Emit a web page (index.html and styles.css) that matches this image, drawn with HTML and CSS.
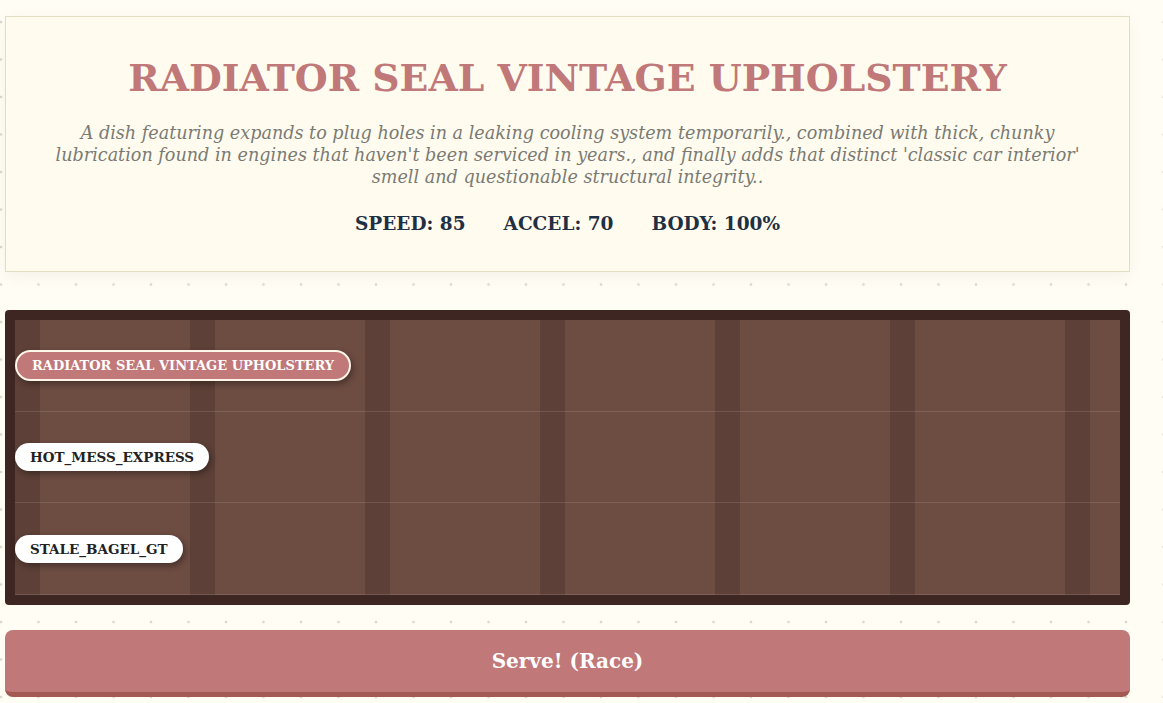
FILE: index.html
```html
<!DOCTYPE html>
<html>
<head>
<meta charset="utf-8">
<link rel="stylesheet" href="styles.css">
</head>
<body>
<div class="page">
  <header class="card">
    <h1 class="title">RADIATOR SEAL VINTAGE UPHOLSTERY</h1>
    <p class="desc">A dish featuring expands to plug holes in a leaking cooling system temporarily., combined with thick, chunky lubrication found in engines that haven't been serviced in years., and finally adds that distinct 'classic car interior' smell and questionable structural integrity..</p>
    <div class="stats">
      <span class="stat">SPEED: 85</span>
      <span class="stat">ACCEL: 70</span>
      <span class="stat">BODY: 100%</span>
    </div>
  </header>
  <section class="track">
    <div class="lanes">
      <div class="lane"><span class="car car-player">RADIATOR SEAL VINTAGE UPHOLSTERY</span></div>
      <div class="lane"><span class="car">HOT_MESS_EXPRESS</span></div>
      <div class="lane"><span class="car">STALE_BAGEL_GT</span></div>
    </div>
  </section>
  <button class="serve">Serve! (Race)</button>
</div>
</body>
</html>
```
FILE: styles.css
```css
html, body {
  margin: 0;
  padding: 0;
}
body {
  background-color: #fffdf4;
  background-image: radial-gradient(circle, #dcd9cc 1.4px, transparent 1.6px);
  background-size: 37.5px 37.5px;
  background-position: -17.75px 3.25px;
  font-family: "DejaVu Serif", "Liberation Serif", serif;
  height: 703px;
  overflow: hidden;
}
.page {
  width: 1125px;
  margin: 16px 0 0 5px;
  display: flex;
  flex-direction: column;
}
.card {
  background: #fffcef;
  border: 1px solid #e2dcc2;
  box-shadow: 0 4px 16px rgba(0, 0, 0, 0.05);
  text-align: center;
  padding: 36px 40px 30px;
  height: 256px;
  box-sizing: border-box;
}
.title {
  margin: 0;
  color: #c07878;
  font-size: 37.8px;
  line-height: 50px;
  font-weight: bold;
}
.desc {
  margin: 19px 0 0;
  color: #7a7a74;
  font-style: italic;
  font-size: 17.6px;
  line-height: 22px;
}
.stats {
  margin-top: 25px;
  display: flex;
  justify-content: center;
  gap: 38px;
  color: #1f2f44;
  font-weight: bold;
  font-size: 18.5px;
}
.track {
  margin-top: 38px;
  background: #3e2622;
  border-radius: 4px;
  padding: 10px;
}
.lanes {
  background: repeating-linear-gradient(90deg, #5d4037 0 25px, #6d4c42 25px 175px);
  display: flex;
  flex-direction: column;
}
.lane {
  height: 90.67px;
  border-bottom: 1px solid rgba(255, 255, 255, 0.12);
  display: flex;
  align-items: center;
}
.car {
  background: #ffffff;
  color: #222222;
  font-weight: bold;
  font-size: 13.5px;
  border-radius: 999px;
  padding: 0 15px;
  height: 28px;
  line-height: 28px;
  box-shadow: 2px 3px 6px rgba(0, 0, 0, 0.35);
}
.car-player {
  background: #c07878;
  color: #ffffff;
  border: 2px solid #fff6ea;
  height: 27px;
  line-height: 27px;
  padding: 0 15px;
  font-size: 13px;
}
.serve {
  margin-top: 25px;
  height: 67px;
  background: #c07878;
  border: none;
  border-bottom: 5px solid #a25a52;
  border-radius: 8px;
  color: #ffffff;
  font-family: "DejaVu Serif", "Liberation Serif", serif;
  font-weight: bold;
  font-size: 20px;
  padding: 0;
}
```
